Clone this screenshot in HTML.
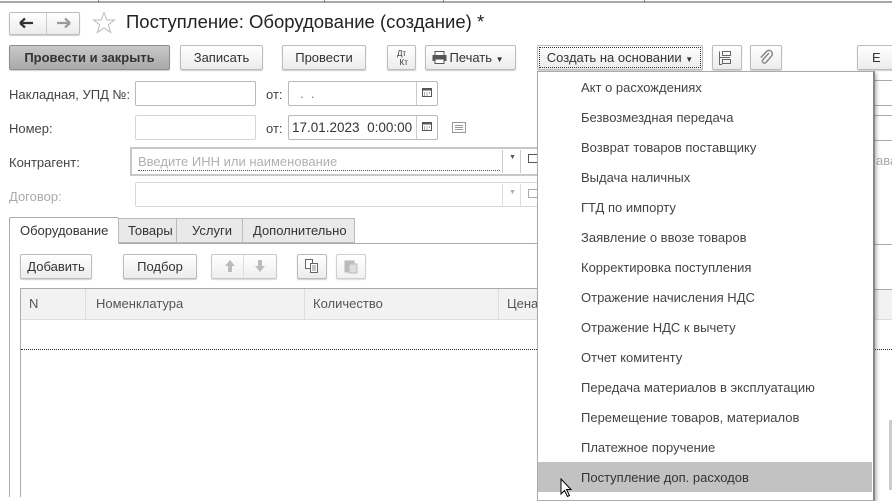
<!DOCTYPE html>
<html><head><meta charset="utf-8">
<style>
*{box-sizing:border-box;margin:0;padding:0}
body{width:892px;height:497px;overflow:hidden;background:#fff;font-family:"Liberation Sans",Arial,sans-serif;font-size:13px;color:#444;position:relative}
.a{position:absolute}
.btn{position:absolute;height:25px;border:1px solid #bcbcbc;border-radius:2px;background:linear-gradient(#fff,#ececec);box-shadow:0 1px 1px rgba(0,0,0,.2);text-align:center;line-height:23px;color:#333;font-size:13px;white-space:nowrap}
.inp{position:absolute;height:25px;border:1px solid #b9b9b9;border-radius:2px;background:#fff}
.lbl{position:absolute;color:#444;font-size:13px}
.mi{position:absolute;left:581px;font-size:13px;color:#444}
.hl{position:absolute;background:#aaa;height:1px}
</style></head><body>
<!-- top strip -->
<div class="a" style="left:0;top:1px;width:892px;height:2px;background:#a8a8a8"></div>
<div class="a" style="left:98px;top:0;width:1px;height:3px;background:#888"></div>
<div class="a" style="left:324px;top:0;width:1px;height:3px;background:#888"></div>
<div class="a" style="left:443px;top:0;width:1px;height:3px;background:#888"></div>
<div class="a" style="left:644px;top:0;width:1px;height:3px;background:#888"></div>

<!-- nav -->
<div class="btn" style="left:9px;top:12px;width:71px;height:23px"></div>
<div class="a" style="left:46px;top:13px;width:1px;height:21px;background:#ccc"></div>
<svg class="a" style="left:19px;top:17px" width="16" height="12"><path d="M1 6H14M1 6L6 1.5M1 6L6 10.5" stroke="#333" stroke-width="2.2" fill="none"/></svg>
<svg class="a" style="left:56px;top:17px" width="16" height="12"><path d="M1 6H14M14 6L9 1.5M14 6L9 10.5" stroke="#999" stroke-width="2.2" fill="none"/></svg>
<svg class="a" style="left:92px;top:11px" width="24" height="24"><path d="M12 1.5L14.8 9H22.5L16.3 13.7L18.6 21.5L12 16.8L5.4 21.5L7.7 13.7L1.5 9H9.2Z" fill="none" stroke="#bbb" stroke-width="1"/></svg>
<div class="a" style="left:126px;top:11px;font-size:18.5px;color:#222">Поступление: Оборудование (создание) *</div>

<!-- toolbar -->
<div class="btn" style="left:9px;top:45px;width:161px;background:linear-gradient(#c9c9c9,#a9a9a9);border-color:#8e8e8e;font-weight:bold;color:#333">Провести и закрыть</div>
<div class="btn" style="left:180px;top:45px;width:83px">Записать</div>
<div class="btn" style="left:282px;top:45px;width:84px">Провести</div>
<div class="btn" style="left:387px;top:45px;width:29px;font-size:8px;line-height:9px;padding-top:3px">Дт<br>&nbsp;&nbsp;Кт</div>
<div class="btn" style="left:425px;top:45px;width:91px;padding-left:12px">Печать <span style="font-size:8px">▼</span></div>
<svg class="a" style="left:432px;top:51px" width="15" height="13"><rect x="3" y="0.5" width="9" height="4" fill="#fff" stroke="#555"/><rect x="0.5" y="4" width="14" height="6" fill="#555"/><rect x="3" y="8" width="9" height="4.5" fill="#fff" stroke="#555"/></svg>
<div class="btn" style="left:537px;top:45px;width:166px;outline:1px dotted #333;outline-offset:-3px">Создать на основании <span style="font-size:8px">▼</span></div>
<div class="btn" style="left:712px;top:45px;width:30px"></div>
<svg class="a" style="left:718px;top:50px" width="17" height="16"><rect x="4.5" y="1.5" width="8" height="4" fill="none" stroke="#666"/><rect x="4.5" y="9.5" width="8" height="4" fill="none" stroke="#666"/><path d="M1.5 1.5V14.5H4M1.5 7.5H12" stroke="#666" fill="none"/></svg>
<div class="btn" style="left:750px;top:45px;width:32px"></div>
<svg class="a" style="left:758px;top:49px" width="16" height="17"><path d="M11 4L5 10.5a2 2 0 0 0 3 3L13.5 7a3.3 3.3 0 0 0-5-4.5L2.8 8.5" stroke="#888" stroke-width="1.5" fill="none"/></svg>
<div class="btn" style="left:857px;top:45px;width:45px;text-align:left;padding-left:14px">Е</div>

<!-- right side remnants -->
<div class="hl" style="left:875px;top:80px;width:17px"></div>
<div class="hl" style="left:875px;top:105px;width:17px"></div>
<div class="hl" style="left:875px;top:115px;width:17px"></div>
<div class="hl" style="left:875px;top:140px;width:17px"></div>
<div class="a" style="left:876px;top:153px;color:#aaa">ава</div>
<div class="hl" style="left:875px;top:244px;width:17px"></div>
<div class="a" style="left:875px;top:289px;width:17px;height:31px;background:#f2f2f2;border-top:1px solid #aaa;border-bottom:1px solid #ddd"></div>
<div class="a" style="left:875px;top:349px;width:17px;border-top:1px dotted #333"></div>
<div class="a" style="left:889px;top:420px;width:3px;height:70px;background:#ccc"></div>

<!-- form fields -->
<div class="lbl" style="left:9px;top:87px">Накладная, УПД №:</div>
<div class="inp" style="left:135px;top:81px;width:121px"></div>
<div class="lbl" style="left:266px;top:87px">от:</div>
<div class="inp" style="left:288px;top:81px;width:150px"></div>
<div class="a" style="left:416px;top:82px;width:1px;height:23px;background:#ccc"></div>
<div class="a" style="left:300px;top:86px;color:#777">. &nbsp;.</div>
<svg class="a" style="left:422px;top:87px" width="10" height="10"><rect x="0.5" y="1.5" width="9" height="8" fill="none" stroke="#555"/><rect x="0.5" y="1.5" width="9" height="2" fill="#555"/><path d="M2 6h1M4.5 6h1M7 6h1M2 8h1M4.5 8h1" stroke="#555"/></svg>

<div class="lbl" style="left:9px;top:121px">Номер:</div>
<div class="inp" style="left:135px;top:115px;width:121px;border-color:#d5d5d5"></div>
<div class="lbl" style="left:266px;top:121px">от:</div>
<div class="inp" style="left:288px;top:115px;width:150px"></div>
<div class="a" style="left:416px;top:116px;width:1px;height:23px;background:#ccc"></div>
<div class="a" style="left:292px;top:120px;color:#333;font-size:13.5px">17.01.2023&nbsp; 0:00:00</div>
<svg class="a" style="left:422px;top:121px" width="10" height="10"><rect x="0.5" y="1.5" width="9" height="8" fill="none" stroke="#555"/><rect x="0.5" y="1.5" width="9" height="2" fill="#555"/><path d="M2 6h1M4.5 6h1M7 6h1M2 8h1M4.5 8h1" stroke="#555"/></svg>
<svg class="a" style="left:452px;top:122px" width="14" height="11"><rect x="0.5" y="0.5" width="13" height="10" fill="none" stroke="#999"/><path d="M3 3.5h8M3 5.5h8M3 7.5h8" stroke="#999"/></svg>

<div class="lbl" style="left:9px;top:155px">Контрагент:</div>
<div class="a" style="left:130px;top:147px;width:410px;height:29px;border:2px solid #c8c8c8;border-right:none"></div>
<div class="a" style="left:138px;top:154px;color:#b0b0b0">Введите ИНН или наименование</div>
<div class="a" style="left:138px;top:170px;width:362px;border-top:1px dotted #555"></div>
<div class="a" style="left:502px;top:150px;width:1px;height:23px;background:#ccc"></div>
<div class="a" style="left:509px;top:154px;font-size:7px;color:#555">▼</div>
<div class="a" style="left:520px;top:150px;width:1px;height:23px;background:#ccc"></div>
<div class="a" style="left:528px;top:154px;width:9px;height:9px;border:1px solid #555;border-right:none"></div>

<div class="lbl" style="left:9px;top:189px;color:#aaa">Договор:</div>
<div class="inp" style="left:135px;top:182px;width:410px;border-color:#d8d8d8;border-right:none"></div>
<div class="a" style="left:502px;top:184px;width:1px;height:22px;background:#ddd"></div>
<div class="a" style="left:509px;top:189px;font-size:7px;color:#aaa">▼</div>
<div class="a" style="left:520px;top:184px;width:1px;height:22px;background:#ddd"></div>
<div class="a" style="left:528px;top:189px;width:9px;height:9px;border:1px solid #aaa;border-right:none"></div>

<!-- tabs -->
<div class="a" style="left:9px;top:243px;width:540px;height:1px;background:#aaa"></div>
<div class="a" style="left:9px;top:243px;width:1px;height:254px;background:#aaa"></div>
<div class="a" style="left:9px;top:217px;width:110px;height:27px;border:1px solid #aaa;border-bottom:1px solid #fff;background:#fff;border-radius:2px 2px 0 0"></div>
<div class="a" style="left:20px;top:223px;color:#333">Оборудование</div>
<div class="a" style="left:118px;top:218px;width:59px;height:25px;border:1px solid #bbb;background:#e9e9e9"></div>
<div class="a" style="left:128px;top:223px;color:#333">Товары</div>
<div class="a" style="left:176px;top:218px;width:67px;height:25px;border:1px solid #bbb;background:#e9e9e9"></div>
<div class="a" style="left:192px;top:223px;color:#333">Услуги</div>
<div class="a" style="left:242px;top:218px;width:113px;height:25px;border:1px solid #bbb;background:#e9e9e9"></div>
<div class="a" style="left:253px;top:223px;color:#333">Дополнительно</div>

<div class="btn" style="left:20px;top:254px;width:72px">Добавить</div>
<div class="btn" style="left:123px;top:254px;width:74px">Подбор</div>
<div class="btn" style="left:211px;top:254px;width:66px;opacity:.8"></div>
<div class="a" style="left:243px;top:255px;width:1px;height:23px;background:#ddd"></div>
<svg class="a" style="left:224px;top:259px" width="12" height="14"><path d="M6 1L1 7H4V13H8V7H11Z" fill="#bbb"/></svg>
<svg class="a" style="left:254px;top:259px" width="12" height="14"><path d="M6 13L1 7H4V1H8V7H11Z" fill="#bbb"/></svg>
<div class="btn" style="left:297px;top:254px;width:30px"></div>
<svg class="a" style="left:304px;top:258px" width="16" height="16"><rect x="1.5" y="1.5" width="7" height="9" fill="#fff" stroke="#666"/><rect x="6.5" y="5.5" width="7" height="9" fill="#fff" stroke="#666"/><path d="M8 8h4M8 10h4M8 12h4" stroke="#888"/></svg>
<div class="btn" style="left:336px;top:254px;width:30px;opacity:.7"></div>
<svg class="a" style="left:344px;top:258px" width="14" height="16"><rect x="0.5" y="2.5" width="10" height="12" fill="#bbb"/><rect x="5" y="6" width="8" height="9" fill="#ddd" stroke="#bbb"/></svg>

<!-- table -->
<div class="a" style="left:20px;top:288px;width:530px;height:1px;background:#aaa"></div>
<div class="a" style="left:20px;top:288px;width:1px;height:209px;background:#aaa"></div>
<div class="a" style="left:21px;top:289px;width:529px;height:31px;background:#f2f2f2;border-bottom:1px solid #ddd"></div>
<div class="a" style="left:85px;top:289px;width:1px;height:31px;background:#ddd"></div>
<div class="a" style="left:304px;top:289px;width:1px;height:31px;background:#ddd"></div>
<div class="a" style="left:498px;top:289px;width:1px;height:31px;background:#ddd"></div>
<div class="a" style="left:29px;top:296px;color:#555">N</div>
<div class="a" style="left:96px;top:296px;color:#555">Номенклатура</div>
<div class="a" style="left:313px;top:296px;color:#555">Количество</div>
<div class="a" style="left:507px;top:296px;color:#555">Цена</div>
<div class="a" style="left:21px;top:349px;width:520px;border-top:1px dotted #333"></div>

<!-- dropdown menu -->
<div class="a" style="left:537px;top:71px;width:338px;height:430px;background:#fff;border:1px solid #aaa;border-right:2px solid #888;box-shadow:2px 2px 3px rgba(0,0,0,.25)"></div>
<div class="a" style="left:538px;top:462px;width:334px;height:30px;background:#c2c2c2"></div>
<div class="mi" style="top:80px">Акт о расхождениях</div>
<div class="mi" style="top:110px">Безвозмездная передача</div>
<div class="mi" style="top:140px">Возврат товаров поставщику</div>
<div class="mi" style="top:170px">Выдача наличных</div>
<div class="mi" style="top:200px">ГТД по импорту</div>
<div class="mi" style="top:230px">Заявление о ввозе товаров</div>
<div class="mi" style="top:260px">Корректировка поступления</div>
<div class="mi" style="top:290px">Отражение начисления НДС</div>
<div class="mi" style="top:320px">Отражение НДС к вычету</div>
<div class="mi" style="top:350px">Отчет комитенту</div>
<div class="mi" style="top:380px">Передача материалов в эксплуатацию</div>
<div class="mi" style="top:410px">Перемещение товаров, материалов</div>
<div class="mi" style="top:440px">Платежное поручение</div>
<div class="mi" style="top:470px;color:#333">Поступление доп. расходов</div>
<svg class="a" style="left:560px;top:478px" width="14" height="19"><path d="M1 1V16L4.5 12.5L7.5 18.5L9.5 17.5L6.5 11.5H11Z" fill="#fff" stroke="#000" stroke-width="1"/></svg>
</body></html>
